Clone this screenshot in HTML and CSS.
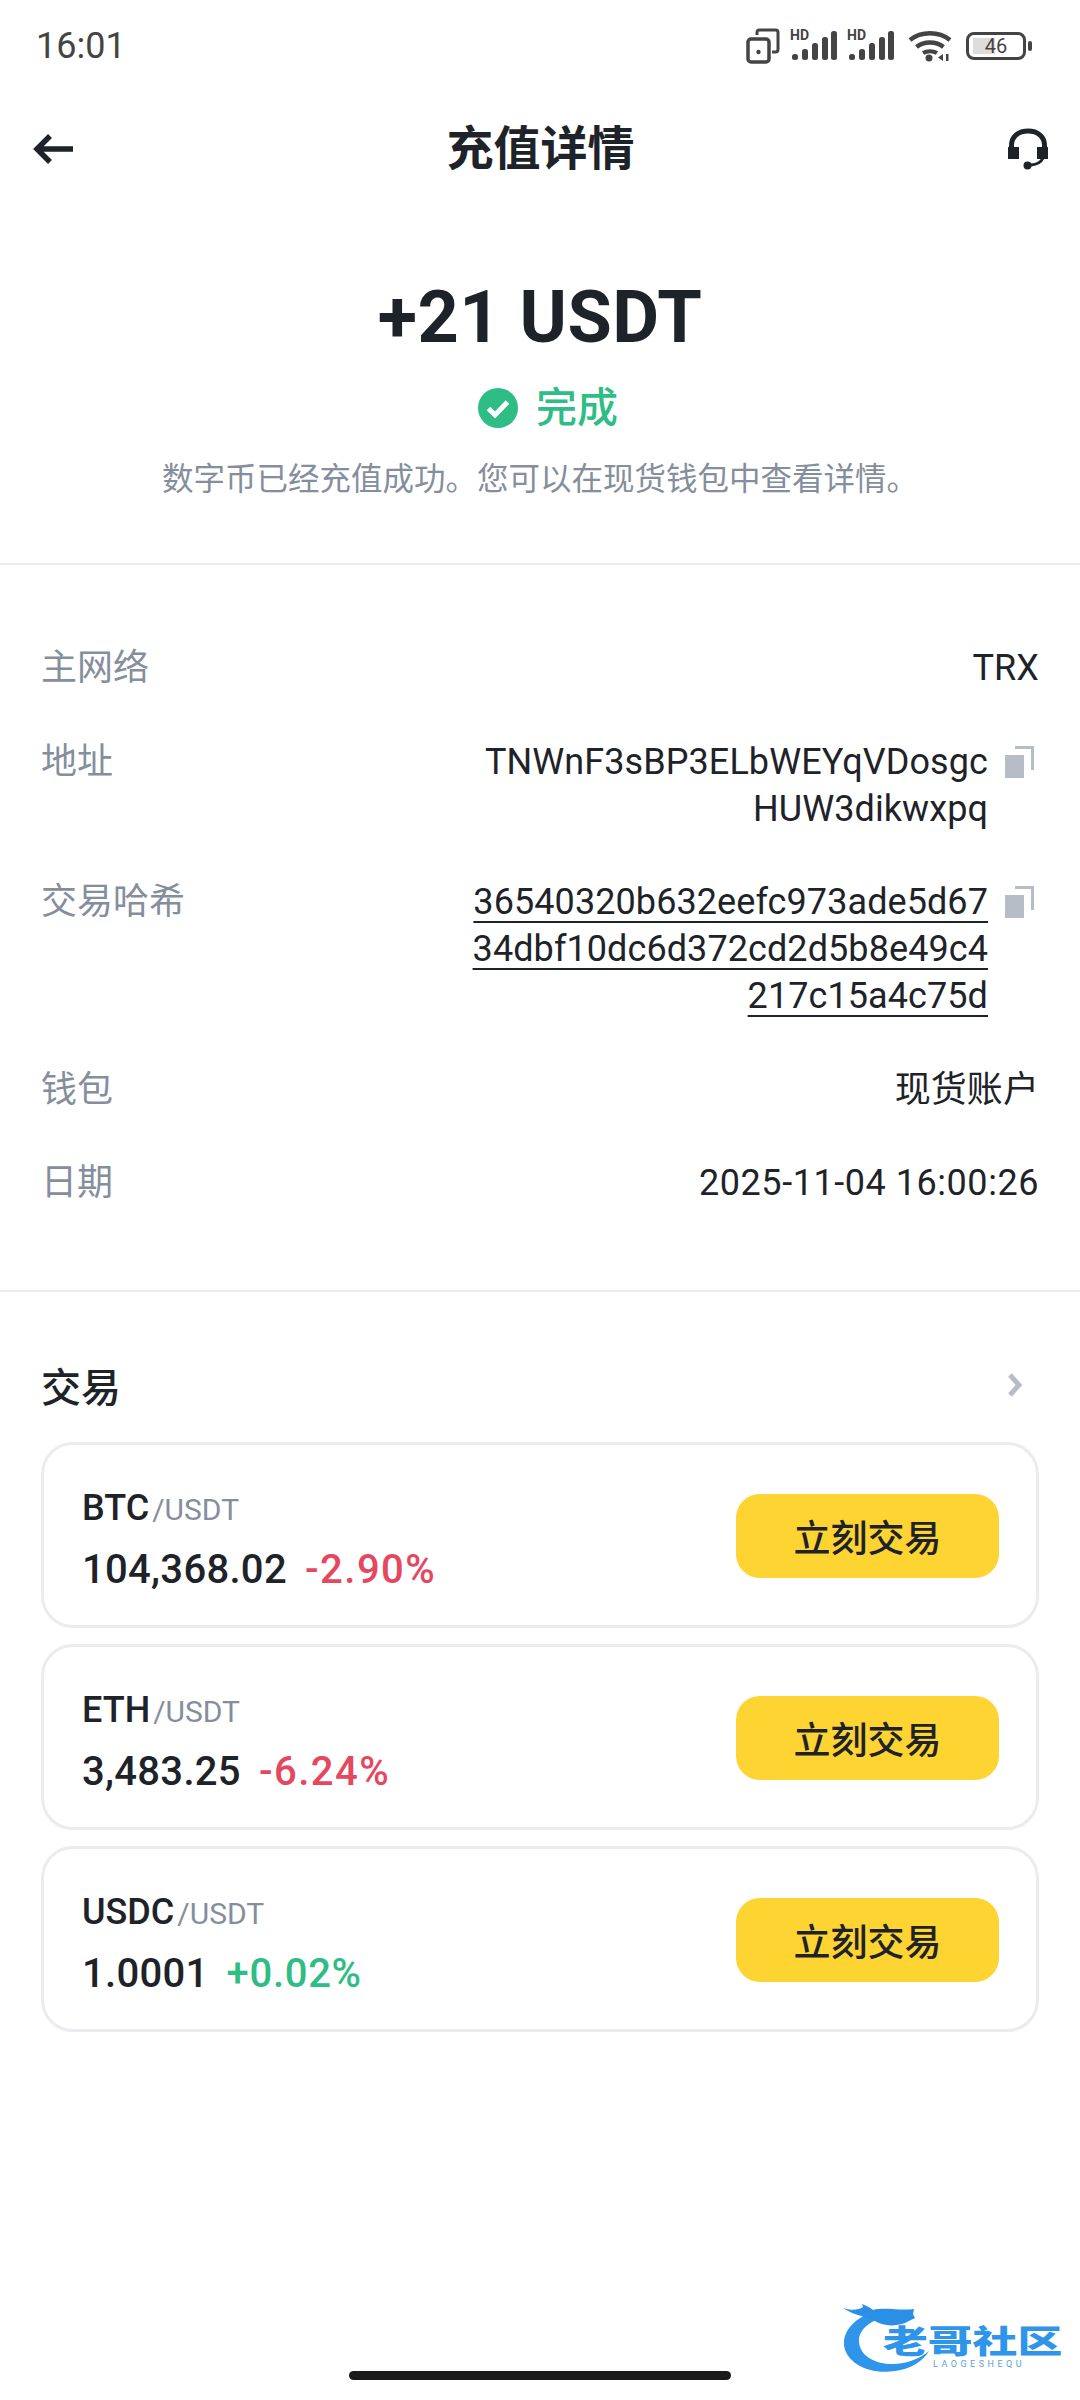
FILE: index.html
```html
<!DOCTYPE html>
<html lang="zh-CN">
<head>
    <meta charset="UTF-8">
    <title>充值详情</title>
    <link rel="stylesheet" href="styles.css">
</head>
<body>
<div class="page">
    <div class="status-bar">
        <span class="time">16:01</span>
        <div class="status-icons">
            <svg class="ic-dual" width="34" height="36" viewBox="0 0 34 36">
                <path d="M11 7V4.500A2.500 2.500 0 0 1 13.500 2H29.500A2.500 2.500 0 0 1 32 4.500V21.500A2.500 2.500 0 0 1 29.500 24H26" fill="none" stroke="#444" stroke-width="3"/>
                <rect x="2" y="11" width="21" height="23" rx="3" fill="none" stroke="#444" stroke-width="3.500"/>
                <circle cx="12.500" cy="24" r="2.200" fill="#444"/>
            </svg>
            <div class="signal">
                <span class="hd">HD</span>
                <svg width="47" height="30" viewBox="0 0 47 30">
                    <rect x="2" y="23" width="6" height="6" rx="2.500" fill="#444"/>
                    <rect x="12" y="18" width="6" height="11" rx="2.500" fill="#444"/>
                    <rect x="22" y="12" width="6" height="17" rx="2.500" fill="#444"/>
                    <rect x="32" y="6" width="6" height="23" rx="2.500" fill="#444"/>
                    <rect x="41" y="0" width="6" height="29" rx="2.500" fill="#444"/>
                </svg>
            </div>
            <div class="signal">
                <span class="hd">HD</span>
                <svg width="47" height="30" viewBox="0 0 47 30">
                    <rect x="2" y="23" width="6" height="6" rx="2.500" fill="#444"/>
                    <rect x="12" y="18" width="6" height="11" rx="2.500" fill="#444"/>
                    <rect x="22" y="12" width="6" height="17" rx="2.500" fill="#444"/>
                    <rect x="32" y="6" width="6" height="23" rx="2.500" fill="#444"/>
                    <rect x="41" y="0" width="6" height="29" rx="2.500" fill="#444"/>
                </svg>
            </div>
            <svg class="ic-wifi" width="44" height="32" viewBox="0 0 44 32">
                <path d="M2 10C13 1 31 1 42 10" fill="none" stroke="#444" stroke-width="4.500"/>
                <path d="M8.500 17C16 11 28 11 35.500 17" fill="none" stroke="#444" stroke-width="4.500"/>
                <path d="M15 23C19 20.500 25 20.500 29 23" fill="none" stroke="#444" stroke-width="4"/>
                <circle cx="21" cy="28" r="3.500" fill="#444"/>
                <path d="M35 24V31L30 27.500ZM38 24V31H40.500V24Z" fill="#444"/>
            </svg>
            <div class="battery">
                <div class="battery-body">
                    <span class="battery-fill"></span>
                    <span class="battery-num">46</span>
                </div>
                <span class="battery-nub"></span>
            </div>
        </div>
    </div>

    <div class="header">
        <svg class="back" width="42" height="32" viewBox="0 0 42 32">
            <path d="M18 3L5 16L18 29M6 16H41" fill="none" stroke="#1e2329" stroke-width="5.500"/>
        </svg>
        <h1 class="title">充值详情</h1>
        <svg class="support" width="42" height="42" viewBox="0 0 42 42">
            <path d="M4.500 20V17.500C4.500 8.500 11.500 3 21 3S37.500 8.500 37.500 17.500V20" fill="none" stroke="#1e2329" stroke-width="5"/>
            <rect x="1" y="19" width="11" height="12" fill="#1e2329"/>
            <rect x="30" y="19" width="11" height="12" fill="#1e2329"/>
            <path d="M36 30C34 34.500 29 36.500 24 37" fill="none" stroke="#1e2329" stroke-width="3"/>
            <circle cx="20.500" cy="37.500" r="4" fill="#1e2329"/>
        </svg>
    </div>

    <div class="summary">
        <div class="amount">+21 USDT</div>
        <div class="state">
            <svg width="40" height="40" viewBox="0 0 40 40">
                <circle cx="20" cy="20" r="20" fill="#2ebd85"/>
                <path d="M10.500 20.500L17 27L29.500 14" fill="none" stroke="#fff" stroke-width="5"/>
            </svg>
            <span>完成</span>
        </div>
        <p class="note">数字币已经充值成功。您可以在现货钱包中查看详情。</p>
    </div>

    <div class="details">
        <div class="row">
            <span class="label">主网络</span>
            <span class="value">TRX</span>
        </div>
        <div class="row">
            <span class="label">地址</span>
            <div class="value-copy">
                <span class="value">TNWnF3sBP3ELbWEYqVDosgc<br>HUW3dikwxpq</span>
                <svg class="copy" width="29" height="32" viewBox="0 0 29 32">
                    <rect x="0" y="9" width="19" height="23" fill="#b7bdc6"/>
                    <path d="M10 1.500H27.500V24" fill="none" stroke="#b7bdc6" stroke-width="3"/>
                </svg>
            </div>
        </div>
        <div class="row">
            <span class="label">交易哈希</span>
            <div class="value-copy">
                <span class="value link">36540320b632eefc973ade5d67<br>34dbf10dc6d372cd2d5b8e49c4<br>217c15a4c75d</span>
                <svg class="copy" width="29" height="32" viewBox="0 0 29 32">
                    <rect x="0" y="9" width="19" height="23" fill="#b7bdc6"/>
                    <path d="M10 1.500H27.500V24" fill="none" stroke="#b7bdc6" stroke-width="3"/>
                </svg>
            </div>
        </div>
        <div class="row">
            <span class="label">钱包</span>
            <span class="value">现货账户</span>
        </div>
        <div class="row">
            <span class="label">日期</span>
            <span class="value date">2025-11-04 16:00:26</span>
        </div>
    </div>

    <div class="trade">
        <div class="trade-head">
            <h2>交易</h2>
            <svg width="18" height="26" viewBox="0 0 18 26">
                <path d="M4 3L13 13L4 23" fill="none" stroke="#b7bdc6" stroke-width="5"/>
            </svg>
        </div>
        <div class="card">
            <div class="pair">
                <div class="pair-name">BTC<span>/USDT</span></div>
                <div class="pair-price">104,368.02<span class="down">-2.90%</span></div>
            </div>
            <div class="btn">立刻交易</div>
        </div>
        <div class="card">
            <div class="pair">
                <div class="pair-name">ETH<span>/USDT</span></div>
                <div class="pair-price">3,483.25<span class="down">-6.24%</span></div>
            </div>
            <div class="btn">立刻交易</div>
        </div>
        <div class="card">
            <div class="pair">
                <div class="pair-name">USDC<span>/USDT</span></div>
                <div class="pair-price">1.0001<span class="up">+0.02%</span></div>
            </div>
            <div class="btn">立刻交易</div>
        </div>
    </div>

    <div class="home-bar"></div>

    <div class="watermark">
        <svg class="dragon" width="100" height="72" viewBox="0 0 100 72">
            <path d="M24 11C8 19 0 30 1 42C3 60 26 72 52 68C68 66 80 58 86 48C76 56 62 62 46 61C30 60 17 52 16 39C15 30 22 22 33 17Z" fill="#2f95ea"/>
            <path d="M0 5C8 8 16 7 20 4L19 1C24 3 28 5 30 7C42 4 58 8 71 6L70 11L72 15L66 18C56 24 40 24 30 17C20 13 8 11 0 5Z" fill="#2b8fe6"/>
        </svg>
        <div class="wm-text">老哥社区</div>
        <div class="wm-sub">LAOGESHEQU</div>
    </div>
</div>
</body>
</html>
```

FILE: styles.css
```css
* {
    box-sizing: border-box;
}

body {
    margin: 0;
    background: #fff;
    color: #1e2329;
    font-family: Roboto, "Noto Sans CJK SC", sans-serif;
}

.page {
    position: relative;
    width: 1080px;
    height: 2400px;
    display: flex;
    flex-direction: column;
    overflow: hidden;
}

/* status bar */
.status-bar {
    height: 92px;
    padding: 0 48px 0 36px;
    display: flex;
    align-items: center;
    justify-content: space-between;
}

.time {
    font-size: 36px;
    color: #444;
}

.status-icons {
    display: flex;
    align-items: center;
    gap: 10px;
}

.signal {
    position: relative;
    width: 47px;
    height: 30px;
}

.hd {
    position: absolute;
    left: 0;
    top: -3px;
    font-size: 14px;
    line-height: 14px;
    font-weight: 700;
    color: #444;
}

.signal svg {
    display: block;
}

.ic-wifi {
    margin-left: 4px;
}

.battery {
    margin-left: 4px;
    display: flex;
    align-items: center;
    gap: 2px;
}

.battery-body {
    position: relative;
    width: 60px;
    height: 28px;
    border: 3px solid #444;
    border-radius: 8px;
    display: flex;
    align-items: center;
    justify-content: center;
}

.battery-fill {
    position: absolute;
    left: 4px;
    top: 3px;
    bottom: 3px;
    width: 22px;
    background: #ddd;
}

.battery-num {
    position: relative;
    font-size: 20px;
    color: #444;
}

.battery-nub {
    width: 4px;
    height: 10px;
    background: #444;
    border-radius: 2px;
}

/* header */
.header {
    height: 112px;
    padding: 2px 31px 0 32px;
    display: grid;
    grid-template-columns: 1fr auto 1fr;
    align-items: center;
}

.support {
    justify-self: end;
}

.title {
    margin: 0;
    font-size: 47px;
    line-height: 60px;
    font-weight: 700;
}

/* summary */
.summary {
    padding: 70px 0 0;
    height: 361px;
    border-bottom: 2px solid #eaecef;
    text-align: center;
}

.amount {
    font-size: 72px;
    line-height: 88px;
    font-weight: 700;
    letter-spacing: .5px;
}

.state {
    margin-top: 16px;
    padding-left: 16px;
    display: flex;
    align-items: center;
    justify-content: center;
    gap: 18px;
    color: #2ebd85;
    font-size: 41px;
    line-height: 60px;
    font-weight: 500;
}

.note {
    margin: 21px 0 0;
    font-size: 31.5px;
    line-height: 42px;
    color: #848e9c;
}

/* details */
.details {
    height: 727px;
    padding: 80px 41px 0;
    border-bottom: 2px solid #eaecef;
}

.row {
    margin-bottom: 46.5px;
    display: flex;
    justify-content: space-between;
    font-size: 36px;
    line-height: 47px;
}

.label {
    color: #848e9c;
}

.value {
    text-align: right;
    letter-spacing: .08px;
}

.date {
    letter-spacing: .55px;
}

.link {
    text-decoration: underline;
    text-decoration-thickness: 2px;
    text-underline-offset: 7px;
}

.value-copy {
    margin-right: 5px;
    display: flex;
    align-items: flex-start;
    gap: 17px;
}

.copy {
    margin-top: 7px;
}

/* trade */
.trade {
    padding: 0 41px;
}

.trade-head {
    height: 150px;
    padding: 35px 15px 0 0;
    display: flex;
    align-items: center;
    justify-content: space-between;
}

.trade-head h2 {
    margin: 0;
    font-size: 40px;
    font-weight: 500;
}

.card {
    height: 186px;
    margin-bottom: 16px;
    padding: 0 37px 0 38px;
    border: 3px solid #eaecef;
    border-radius: 32px;
    display: flex;
    align-items: center;
    justify-content: space-between;
}

.pair {
    padding-top: 8px;
}

.pair-name {
    font-size: 36px;
    line-height: 48px;
    font-weight: 500;
}

.pair-name span {
    margin-left: 3px;
    font-size: 30px;
    font-weight: 400;
    color: #848e9c;
}

.pair-price {
    margin-top: 11px;
    font-size: 40px;
    line-height: 50px;
    font-weight: 500;
    letter-spacing: .3px;
}

.pair-price span {
    margin-left: 18px;
    letter-spacing: 1.5px;
}

.pair-price .up {
    letter-spacing: .7px;
}

.down {
    color: #e5475f;
}

.up {
    color: #2ebd85;
}

.btn {
    width: 263px;
    height: 84px;
    margin-top: 2px;
    border-radius: 24px;
    background: #fdd431;
    display: flex;
    align-items: center;
    justify-content: center;
    font-size: 37px;
    font-weight: 500;
}

/* bottom */
.home-bar {
    width: 382px;
    height: 9px;
    margin: auto auto 20px;
    border-radius: 5px;
    background: #1a1a1a;
}

.watermark {
    position: absolute;
    left: 843px;
    top: 2303px;
    width: 226px;
    height: 72px;
}

.dragon {
    position: absolute;
    left: 0;
    top: 0;
}

.wm-text {
    position: absolute;
    left: 40px;
    top: 23px;
    font-size: 32px;
    line-height: 32px;
    font-weight: 900;
    color: #2f95ea;
    white-space: nowrap;
    transform: scaleX(1.4);
    transform-origin: left;
}

.wm-sub {
    position: absolute;
    left: 90px;
    top: 56px;
    font-size: 9px;
    line-height: 10px;
    letter-spacing: 3.500px;
    color: #5a9fd8;
}
```
